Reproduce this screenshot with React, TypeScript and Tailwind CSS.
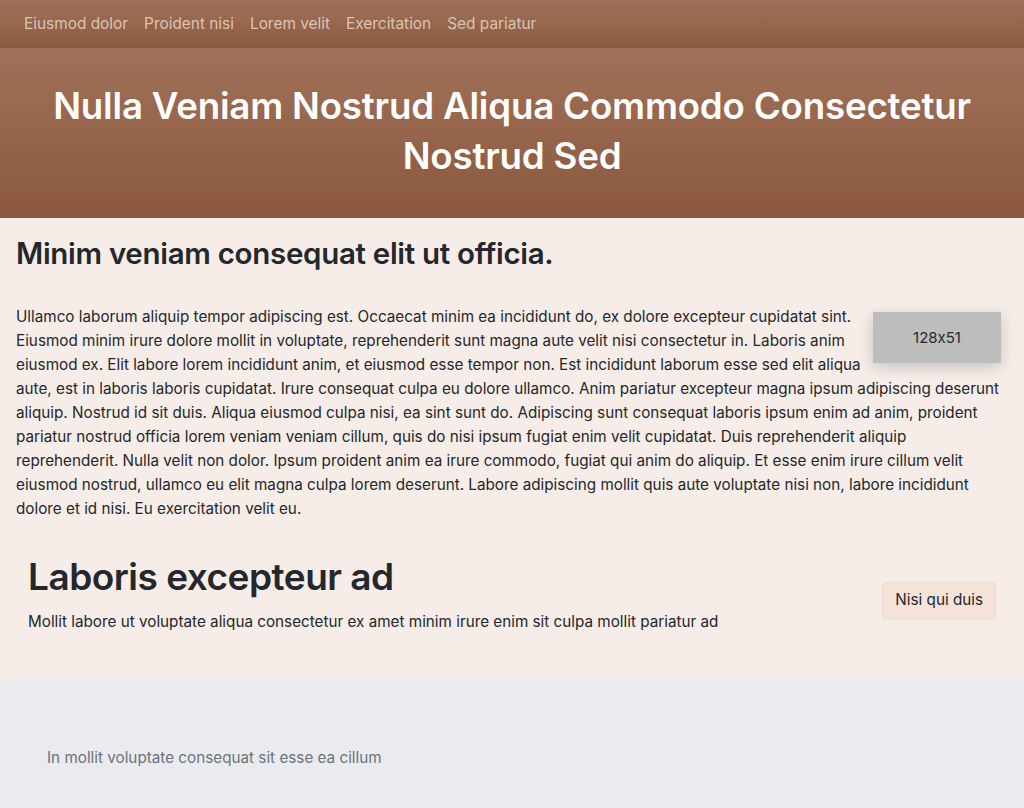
import React from "react";

const navItems = ["Eiusmod dolor", "Proident nisi", "Lorem velit", "Exercitation", "Sed pariatur"];

const body =
  "Ullamco laborum aliquip tempor adipiscing est. Occaecat minim ea incididunt do, ex dolore excepteur cupidatat sint. Eiusmod minim irure dolore mollit in voluptate, reprehenderit sunt magna aute velit nisi consectetur in. Laboris anim eiusmod ex. Elit labore lorem incididunt anim, et eiusmod esse tempor non. Est incididunt laborum esse sed elit aliqua aute, est in laboris laboris cupidatat. Irure consequat culpa eu dolore ullamco. Anim pariatur excepteur magna ipsum adipiscing deserunt aliquip. Nostrud id sit duis. Aliqua eiusmod culpa nisi, ea sint sunt do. Adipiscing sunt consequat laboris ipsum enim ad anim, proident pariatur nostrud officia lorem veniam veniam cillum, quis do nisi ipsum fugiat enim velit cupidatat. Duis reprehenderit aliquip reprehenderit. Nulla velit non dolor. Ipsum proident anim ea irure commodo, fugiat qui anim do aliquip. Et esse enim irure cillum velit eiusmod nostrud, ullamco eu elit magna culpa lorem deserunt. Labore adipiscing mollit quis aute voluptate nisi non, labore incididunt dolore et id nisi. Eu exercitation velit eu.";

export default function App() {
  return (
    <div className="min-h-[808px] bg-[#f6ede8] font-['Inter',sans-serif] text-[#24272b] [font-feature-settings:'calt'_0]">
      {/* nav */}
      <nav className="flex h-12 items-center gap-4 bg-gradient-to-b from-[#9f715a] to-[#8d5a3f] px-6 text-[15.4px] text-[#dcc3b6]">
        {navItems.map((item) => (
          <a key={item} href="#" className="hover:text-white">
            {item}
          </a>
        ))}
      </nav>

      {/* hero */}
      <header className="flex h-[170px] items-center justify-center bg-gradient-to-b from-[#a07159] to-[#8b583d] px-12 pb-1">
        <h1 className="text-center text-[36.7px] font-semibold leading-[50px] tracking-[-0.2px] text-white">
          Nulla Veniam Nostrud Aliqua Commodo Consectetur Nostrud Sed
        </h1>
      </header>

      <main className="px-4 pt-[17px]">
        <h2 className="text-[29.5px] font-semibold leading-9 tracking-[-0.3px]">Minim veniam consequat elit ut officia.</h2>

        <div className="mt-[34px] text-[15.25px] leading-6">
          <div className="float-right mb-2 ml-2 mr-[7px] mt-[7px] flex h-[51px] w-32 items-center justify-center bg-[#bdbdbd] text-[15px] text-[#2a2a2a] shadow-[0_4px_14px_rgba(0,0,0,0.18)]">
            128x51
          </div>
          <p>{body}</p>
        </div>

        <section className="flex items-center justify-between px-3 pb-[46px] pt-[32px]">
          <div>
            <h3 className="text-[37px] font-semibold leading-[48px] tracking-[-0.5px]">Laboris excepteur ad</h3>
            <p className="mt-[9px] text-[15.25px] leading-6">
              Mollit labore ut voluptate aliqua consectetur ex amet minim irure enim sit culpa mollit pariatur ad
            </p>
          </div>
          <button className="mt-[14px] h-[38px] rounded border border-[#f1dcd1] bg-[#f5e2d8] px-3 text-[15.25px] text-[#24272b]">
            Nisi qui duis
          </button>
        </section>
      </main>

      <footer className="rounded-t-md bg-[#eaebee] px-[47px] pb-10 pt-[66px] text-[15.25px] leading-6 text-[#6c737d]">
        In mollit voluptate consequat sit esse ea cillum
      </footer>
    </div>
  );
}
